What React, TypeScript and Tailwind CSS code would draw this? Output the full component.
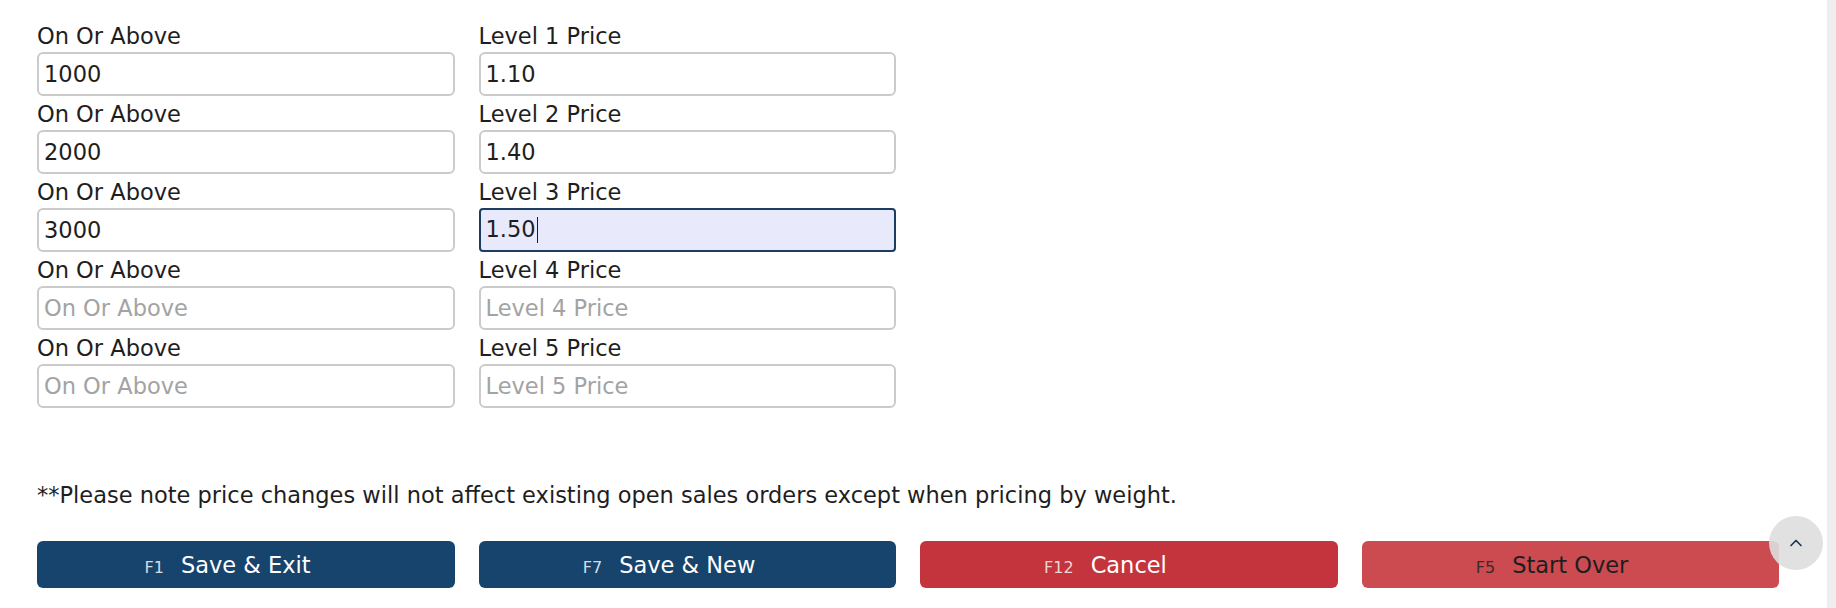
import { ChevronUp } from "lucide-react";

type Tier = {
  qty: string;
  price: string;
  level: number;
  focused?: boolean;
};

const tiers: Tier[] = [
  { qty: "1000", price: "1.10", level: 1 },
  { qty: "2000", price: "1.40", level: 2 },
  { qty: "3000", price: "1.50", level: 3, focused: true },
  { qty: "", price: "", level: 4 },
  { qty: "", price: "", level: 5 },
];

const inputCls =
  "w-full h-[44px] rounded-[6px] border-2 border-[#cbcbcb] bg-white px-[5px] text-[22.5px] text-[#1e1e1e] placeholder:text-[#a3a3a3] outline-none";

const Field = ({ label, value }: { label: string; value: string }) => (
  <div className="flex flex-col">
    <label className="h-[34px] leading-[36px] text-[22.5px] text-[#1e1e1e]">{label}</label>
    <input className={inputCls} value={value} placeholder={label} readOnly />
  </div>
);

const FocusedField = ({ label, value }: { label: string; value: string }) => (
  <div className="flex flex-col">
    <label className="h-[34px] leading-[36px] text-[22.5px] text-[#1e1e1e]">{label}</label>
    <div className="flex h-[44px] items-center rounded-[4px] border-2 border-[#1d3d60] bg-[#e8eafb] px-[5px] text-[22.5px] text-[#1e1e1e]">
      <span>{value}</span>
      <span className="ml-[1px] h-[26px] w-[1px] bg-[#1e1e1e]" />
    </div>
  </div>
);

const buttons = [
  { key: "F1", label: "Save & Exit", bg: "bg-[#17446d]", text: "text-white", keyText: "text-[#d8dde4]" },
  { key: "F7", label: "Save & New", bg: "bg-[#17446d]", text: "text-white", keyText: "text-[#d8dde4]" },
  { key: "F12", label: "Cancel", bg: "bg-[#c4343c]", text: "text-white", keyText: "text-[#f1d3d4]" },
  { key: "F5", label: "Start Over", bg: "bg-[#cb4b51]", text: "text-[#1e1e1e]", keyText: "text-[#3a2a2a]" },
];

export default function App() {
  return (
    <div
      className="relative flex h-[608px] w-full overflow-hidden bg-white"
      style={{ fontFamily: '"DejaVu Sans", Verdana, sans-serif' }}
    >
      <div className="flex-1 pl-[37px] pt-[18px]">
        <div className="grid w-[1742px] grid-cols-4 gap-x-[24px]">
          {tiers.map((t) => (
            <div key={t.level} className="contents">
              <Field label="On Or Above" value={t.qty} />
              {t.focused ? (
                <FocusedField label={`Level ${t.level} Price`} value={t.price} />
              ) : (
                <Field label={`Level ${t.level} Price`} value={t.price} />
              )}
              <div />
              <div />
            </div>
          ))}
        </div>

        <p className="mt-[70px] h-[34px] leading-[34px] text-[22.5px] text-[#1e1e1e]">
          **Please note price changes will not affect existing open sales orders except when pricing by weight.
        </p>

        <div className="mt-[29px] grid w-[1742px] grid-cols-4 gap-x-[24px]">
          {buttons.map((b) => (
            <button
              key={b.key}
              className={`grid h-[47px] grid-cols-[1fr_auto_1fr] items-baseline rounded-[6px] pt-[8px] ${b.bg}`}
            >
              <span className={`justify-self-end pr-[17px] text-[16px] ${b.keyText}`}>{b.key}</span>
              <span className={`text-[22.5px] ${b.text}`}>{b.label}</span>
              <span />
            </button>
          ))}
        </div>
      </div>

      {/* scrollbar strip */}
      <div className="w-[9px] bg-[#eeeeee]" />

      {/* back to top */}
      <button className="absolute left-[1769px] top-[516px] flex h-[54px] w-[54px] items-center justify-center rounded-full bg-[#dedede]/90">
        <ChevronUp className="h-[20px] w-[20px] text-[#1d3350]" strokeWidth={2} />
      </button>
    </div>
  );
}
